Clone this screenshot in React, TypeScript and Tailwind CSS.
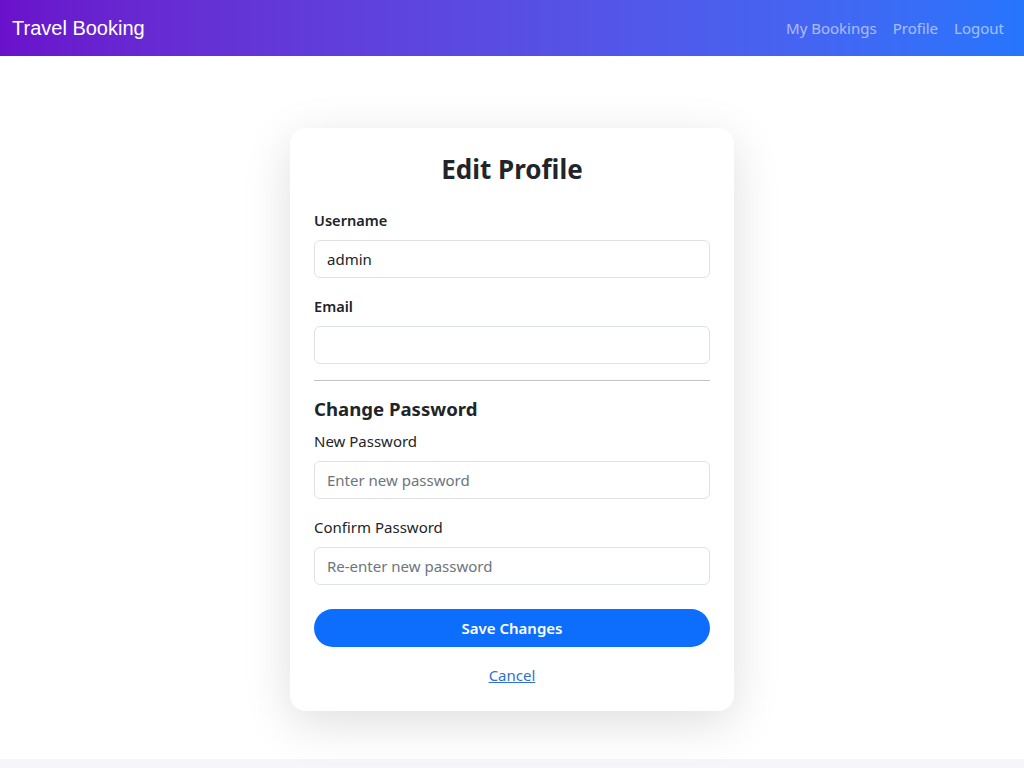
export default function App() {
  return (
    <div className="min-h-[768px] bg-[#f4f6f9] font-['Noto_Sans',sans-serif] text-[#212529]">
      <nav className="flex h-14 items-center justify-between bg-gradient-to-r from-[#6a11cb] to-[#2575fc] pl-3 pr-3">
        <span className="font-['Liberation_Sans',Arial,sans-serif] text-[20px] text-white">
          Travel Booking
        </span>
        <div className="flex items-center text-[15px] text-white/55">
          <a href="#" className="px-2">My Bookings</a>
          <a href="#" className="px-2">Profile</a>
          <a href="#" className="px-2">Logout</a>
        </div>
      </nav>

      <main className="flex justify-center bg-white pt-[72px] pb-12">
        <div className="w-[444px] rounded-2xl bg-white p-6 shadow-[0_12px_48px_rgba(0,0,0,0.13)]">
          <h2 className="mb-[22px] text-center text-[26px] leading-[34px] font-bold">Edit Profile</h2>

          <label className="mb-2 block text-[14.6px] leading-6 font-semibold">Username</label>
          <input
            defaultValue="admin"
            className="mb-4 block h-[38px] w-full rounded-md border border-[#dee2e6] px-3 text-[15px] outline-none"
          />

          <label className="mb-2 block text-[14.6px] leading-6 font-semibold">Email</label>
          <input className="block h-[38px] w-full rounded-md border border-[#dee2e6] px-3 text-[15px] outline-none" />

          <hr className="my-4 border-t border-[#c4c4c4]" />

          <h5 className="mb-2 text-[18.6px] leading-6 font-bold">Change Password</h5>

          <label className="mb-2 block text-[15px] leading-6">New Password</label>
          <input
            type="password"
            placeholder="Enter new password"
            className="mb-4 block h-[38px] w-full rounded-md border border-[#dee2e6] px-3 text-[15px] outline-none placeholder:text-[#6c757d]"
          />

          <label className="mb-2 block text-[15px] leading-6">Confirm Password</label>
          <input
            type="password"
            placeholder="Re-enter new password"
            className="block h-[38px] w-full rounded-md border border-[#dee2e6] px-3 text-[15px] outline-none placeholder:text-[#6c757d]"
          />

          <button className="mt-6 h-[38px] w-full rounded-full bg-[#0d6efd] text-[15px] font-semibold text-white">
            Save Changes
          </button>

          <div className="mt-4 text-center text-[15px] leading-6">
            <a href="#" className="text-[#2f6fd8] underline">Cancel</a>
          </div>
        </div>
      </main>
    </div>
  );
}
